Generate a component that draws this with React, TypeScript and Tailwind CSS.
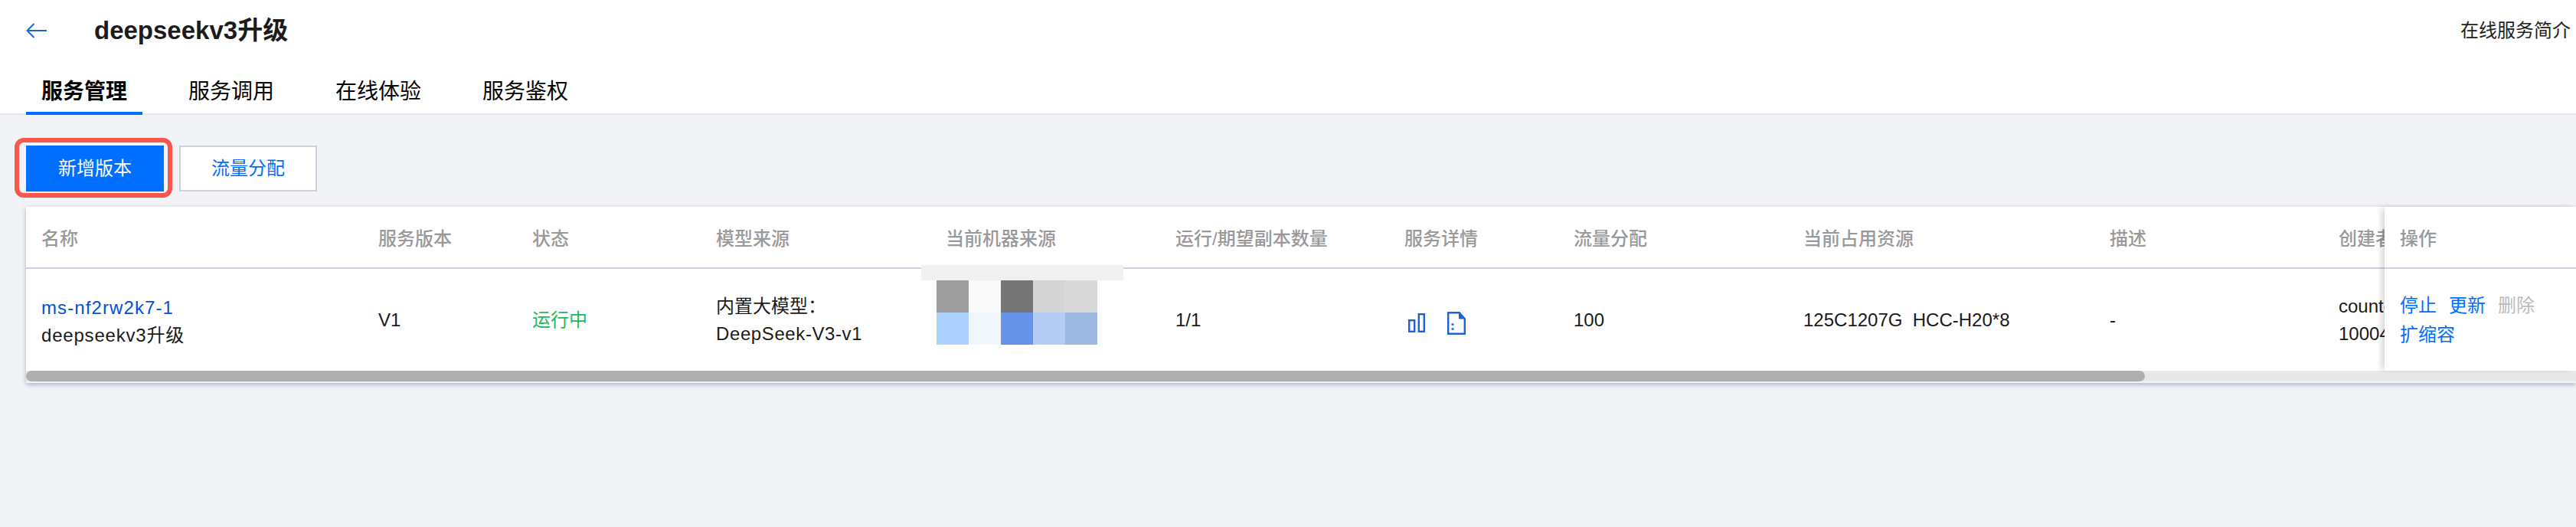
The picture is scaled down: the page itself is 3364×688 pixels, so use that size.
const CJK = "font-['Liberation_Sans','Noto_Sans_CJK_SC',sans-serif]";

const cols: { label: string; w: string }[] = [
  { label: "名称", w: "w-[440px]" },
  { label: "服务版本", w: "w-[201px]" },
  { label: "状态", w: "w-[240px]" },
  { label: "模型来源", w: "w-[300px]" },
  { label: "当前机器来源", w: "w-[300px]" },
  { label: "运行/期望副本数量", w: "w-[299px]" },
  { label: "服务详情", w: "w-[221px]" },
  { label: "流量分配", w: "w-[300px]" },
  { label: "当前占用资源", w: "w-[400px]" },
  { label: "描述", w: "w-[299px]" },
  { label: "创建者", w: "w-[300px]" },
];

const gray = ["bg-[#9e9e9e]", "bg-[#fafafa]", "bg-[#757575]", "bg-[#d5d5d5]", "bg-[#d9d9d9]"];
const blue = ["bg-[#add1ff]", "bg-[#f1f7ff]", "bg-[#6593e8]", "bg-[#b5cdf3]", "bg-[#9cb8e0]"];

function Cell({ w, children }: { w: string; children?: React.ReactNode }) {
  return <div className={`${w} shrink-0 px-5 leading-9`}>{children}</div>;
}

export default function App() {
  return (
    <div className={`${CJK} h-[688px] w-[3364px] overflow-hidden bg-[#f1f3f7] text-2xl text-[#1a1a1a]`}>
      <div className="h-[150px] border-b-2 border-[#e4e6eb] bg-white">
        <div className="flex h-[80px] items-center pl-[34px] pr-[7px]">
          <svg width="28" height="20" viewBox="0 0 28 20" fill="none" stroke="#1f62d8" strokeWidth="2" className="shrink-0">
            <path d="M27 10H2M10.5 1 1.5 10l9 9" />
          </svg>
          <div className="ml-[61px] text-[33px] font-bold text-[#1c1c1c]">deepseekv3升级</div>
          <div className="ml-auto text-[#222]">在线服务简介</div>
        </div>
        <div className="flex h-[70px] gap-10 pl-[34px]">
          {["服务管理", "服务调用", "在线体验", "服务鉴权"].map((t, i) => (
            <div
              key={t}
              className={`flex h-[70px] w-[152px] items-start justify-center pt-[22px] text-[28px] leading-9 text-black ${
                i === 0 ? "border-b-4 border-[#006eff] font-bold" : ""
              }`}
            >
              {t}
            </div>
          ))}
        </div>
      </div>

      <div className="flex gap-5 pl-[34px] pt-10">
        <div className="relative flex h-[60px] w-[180px] items-center justify-center bg-[#006eff] text-white">
          新增版本
          <div className="absolute -bottom-2 -left-[15px] -right-[11px] -top-[10px] rounded-xl border-[6px] border-[#f9564e]" />
        </div>
        <div className="flex h-[60px] w-[180px] items-center justify-center border-2 border-[#ccd1da] bg-white text-[#006eff]">
          流量分配
        </div>
      </div>

      <div className="ml-[34px] mt-5 h-[230px] shadow-[0_2px_6px_rgba(110,120,150,0.55)]">
        <div className="flex h-[214px] bg-white">
          <div className="min-w-0 flex-1 overflow-hidden">
            <div className="flex h-[81px] w-[3300px] items-center border-b-2 border-[#ccd1de] pt-1 font-medium text-[#999]">
              {cols.map((c) => (
                <Cell key={c.label} w={c.w}>
                  <span className="whitespace-nowrap">{c.label}</span>
                </Cell>
              ))}
            </div>
            <div className="flex h-[133px] w-[3300px] items-center">
              <Cell w={cols[0].w}>
                <div className="pt-[5px]">
                  <div className="tracking-[1.1px] text-[#0052d9]">ms-nf2rw2k7-1</div>
                  <div className="tracking-[0.8px]">deepseekv3升级</div>
                </div>
              </Cell>
              <Cell w={cols[1].w}>V1</Cell>
              <Cell w={cols[2].w}>
                <span className="text-[#1cba5e]">运行中</span>
              </Cell>
              <Cell w={cols[3].w}>
                <div>内置大模型：</div>
                <div className="tracking-[0.6px]">DeepSeek-V3-v1</div>
              </Cell>
              <div className={`${cols[4].w} relative h-full shrink-0`}>
                <div className="absolute -top-[5px] left-[-12px] h-5 w-[264px] bg-[#f0f0f0]" />
                <div className="absolute left-2 top-[15px] grid w-[210px] grid-cols-5">
                  {[...gray, ...blue].map((c, i) => (
                    <div key={i} className={`h-[42px] ${c}`} />
                  ))}
                </div>
              </div>
              <Cell w={cols[5].w}>1/1</Cell>
              <div className={`${cols[6].w} flex shrink-0 items-center gap-[29px] pl-[25px] pt-2`}>
                <svg width="22" height="25" viewBox="0 0 22 25" fill="none" stroke="#1f62d8" strokeWidth="2.4">
                  <rect x="1.2" y="9.2" width="7" height="14.6" />
                  <rect x="13.8" y="1.2" width="7" height="22.6" />
                </svg>
                <svg width="24" height="30" viewBox="0 0 24 30" fill="none" stroke="#1f62d8" strokeWidth="2.4">
                  <path d="M1.2 1.2h14.6l7 8v19.6H1.2z" />
                  <path d="M15.5 1.5v7.5h7" fill="#1f62d8" strokeWidth="1" />
                  <path d="M5.5 16.5h3M5.5 22.5h3" />
                </svg>
              </div>
              <Cell w={cols[7].w}>100</Cell>
              <Cell w={cols[8].w}>125C1207G&nbsp; HCC-H20*8</Cell>
              <Cell w={cols[9].w}>-</Cell>
              <Cell w={cols[10].w}>
                <div>counter</div>
                <div>100042</div>
              </Cell>
            </div>
          </div>
          <div className="relative z-10 w-[250px] shrink-0 bg-white shadow-[-6px_0_8px_-2px_rgba(0,0,0,0.16)]">
            <div className="flex h-[81px] items-center border-b-2 border-[#ccd1de] px-5 pt-1 font-medium text-[#999]">操作</div>
            <div className="px-5 pt-[29px] leading-[38px]">
              <div className="flex gap-4 text-[#006eff]">
                <span>停止</span>
                <span>更新</span>
                <span className="text-[#bbb]">删除</span>
              </div>
              <div className="text-[#006eff]">扩缩容</div>
            </div>
          </div>
        </div>
        <div className="h-[14px] bg-[#e8e8e8]">
          <div className="h-full w-[2767px] rounded-[7px] bg-[#afafaf]" />
        </div>
      </div>
    </div>
  );
}
